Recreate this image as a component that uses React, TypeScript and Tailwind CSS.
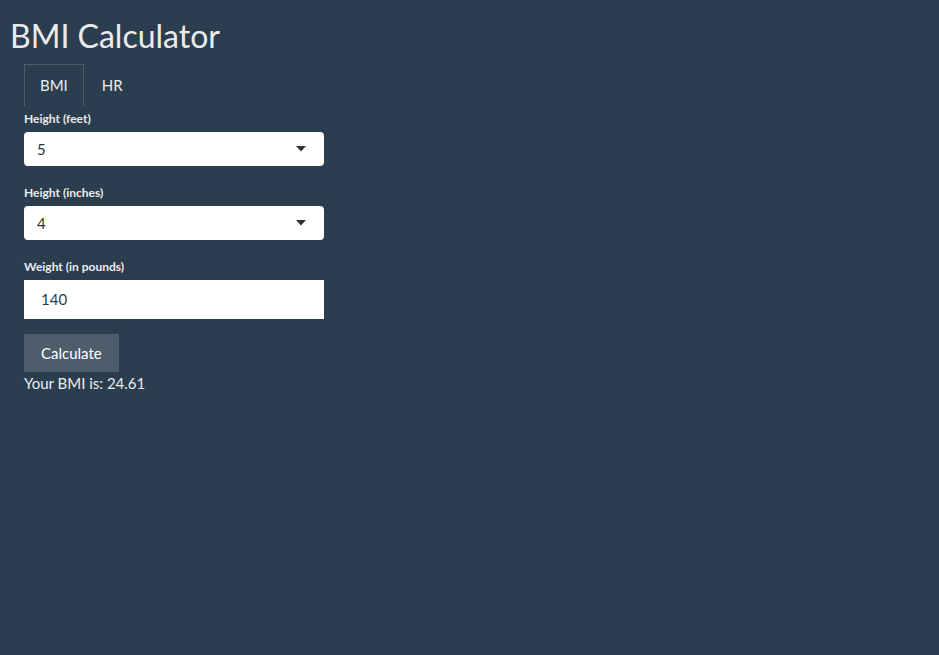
import { useState } from 'react';

function Caret() {
  return (
    <svg width="10" height="6" viewBox="0 0 10 6" className="shrink-0">
      <path d="M0 0 L10 0 L5 5.5 Z" fill="#333333" />
    </svg>
  );
}

function SelectBox({ value }: { value: string }) {
  return (
    <div className="flex h-[34px] w-[300px] items-center justify-between rounded-[4px] bg-white pl-[13px] pr-[18px] text-[15px] text-[#333333]">
      <span>{value}</span>
      <Caret />
    </div>
  );
}

export default function App() {
  const [tab, setTab] = useState('BMI');

  return (
    <div
      className="min-h-[655px] bg-[#2b3e50] text-[#ebebeb]"
      style={{ fontFamily: 'Lato, "Open Sans", sans-serif' }}
    >
      {/* Title */}
      <h1 className="pl-[10px] pt-[18px] text-[32px] leading-[35px] font-normal text-[#ebebeb]">
        BMI Calculator
      </h1>

      <div className="pl-[24px] pt-[11px]">
        {/* Tabs */}
        <div className="flex h-[42px] text-[15px]">
          {['BMI', 'HR'].map((t) => (
            <button
              key={t}
              onClick={() => setTab(t)}
              className={
                tab === t
                  ? 'h-[42px] border border-b-0 border-[#4e5d6c] px-[15px] text-[#ebebeb]'
                  : 'h-[42px] border border-b-0 border-transparent px-[17px] text-[#ebebeb]'
              }
            >
              {t}
            </button>
          ))}
        </div>

        {/* Form */}
        <div className="w-[300px]">
          <label className="mt-[5px] mb-[5px] block text-[12px] leading-[16px] font-bold">
            Height (feet)
          </label>
          <SelectBox value="5" />

          <label className="mt-[19px] mb-[5px] block text-[12px] leading-[16px] font-bold">
            Height (inches)
          </label>
          <SelectBox value="4" />

          <label className="mt-[19px] mb-[5px] block text-[12px] leading-[16px] font-bold">
            Weight (in pounds)
          </label>
          <div className="flex h-[39px] w-[300px] items-center bg-white pl-[17px] text-[15px] text-[#2b3e50]">
            140
          </div>

          <button className="mt-[15px] flex h-[38px] items-center bg-[#4e5d6c] px-[17px] text-[15px] text-white">
            Calculate
          </button>
          <div className="pt-[1px] text-[15px] leading-[21px]">Your BMI is: 24.61</div>
        </div>
      </div>
    </div>
  );
}
